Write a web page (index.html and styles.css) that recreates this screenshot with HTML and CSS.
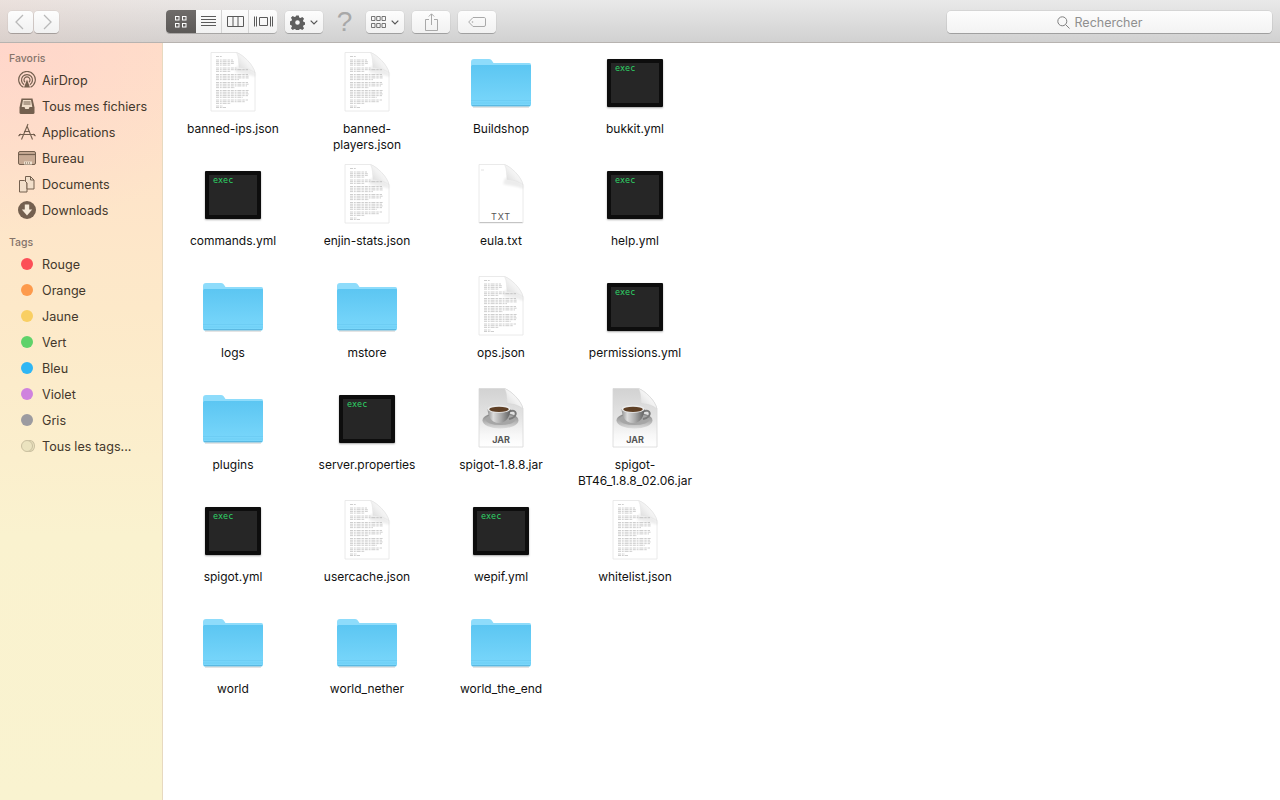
FILE: index.html
```html
<!DOCTYPE html>
<html lang="fr">
<head>
<meta charset="utf-8">
<title>Finder</title>
<link rel="stylesheet" href="styles.css">
</head>
<body>
<svg class="defs" width="0" height="0" aria-hidden="true">
  <defs>
    <filter id="soft" x="-5%" y="-5%" width="110%" height="110%"><feGaussianBlur stdDeviation=".3"/></filter>
    <filter id="softer" x="-20%" y="-20%" width="140%" height="140%"><feGaussianBlur stdDeviation="1"/></filter>
    <linearGradient id="foldShade" x1="0" y1="1" x2="1" y2="0"><stop offset="0" stop-color="#d4d4d4"/><stop offset=".5" stop-color="#f2f2f2"/><stop offset="1" stop-color="#ffffff"/></linearGradient>
    <linearGradient id="jarPage" x1="0" y1="0" x2="0" y2="1"><stop offset="0" stop-color="#d2d2d2"/><stop offset=".5" stop-color="#e4e4e4"/><stop offset=".8" stop-color="#f8f8f8"/><stop offset="1" stop-color="#ffffff"/></linearGradient>
    <linearGradient id="folderFront" x1="0" y1="0" x2="0" y2="1"><stop offset="0" stop-color="#5cc6f2"/><stop offset="1" stop-color="#7ad7fb"/></linearGradient>
    <linearGradient id="cupBody" x1="0" y1="0" x2="1" y2="0"><stop offset="0" stop-color="#8f8f8f"/><stop offset=".25" stop-color="#dcdcdc"/><stop offset=".6" stop-color="#a8a8a8"/><stop offset="1" stop-color="#5e5e5e"/></linearGradient>
    <linearGradient id="saucer" x1="0" y1="0" x2="0" y2="1"><stop offset="0" stop-color="#7c7c7c"/><stop offset="1" stop-color="#dcdcdc"/></linearGradient>
    <symbol id="page" viewBox="0 0 64 64">
      <path d="M11 60H53" stroke="#000" stroke-opacity=".3" stroke-width="2" filter="url(#softer)"/>
      <path d="M10 2.500H35.500C42 5 52 14 54 23V61H10Z" fill="#fff" stroke="#e4e4e4" stroke-width=".8"/>
      <path d="M34 22C40 24 48 24 54 27V23L50 18L36 16Z" fill="#000" opacity=".07" filter="url(#softer)"/>
      <path d="M35.500 2.500C38 7 37.500 12 38 17.500C43 18 49 18.500 54 23C52 14 42 5 35.500 2.500Z" fill="url(#foldShade)" stroke="#e0e0e0" stroke-width=".5"/>
    </symbol>
    <symbol id="doc" viewBox="0 0 64 64">
      <use href="#page"/>
      <g fill="none" stroke="#808080" stroke-opacity=".6" stroke-width=".65" stroke-dasharray="3 .9 1.800 .9 4 .9 2.400 .9" filter="url(#soft)">
        <path d="M15 6.500H21"/>
        <path d="M15 10H32M15 11.700H33M15 13.400H33M15 15.100H30"/>
        <path d="M15 18H36M15 19.700H47M15 21.400H30"/>
        <path d="M15 24.500H47M15 26.200H48M15 27.900H48M15 29.600H38"/>
        <path d="M15 32.500H47M15 34.200H48M15 35.900H46M15 37.600H34"/>
        <path d="M15 40.500H48M15 42.200H47M15 43.900H48M15 45.600H47M15 47.300H42"/>
        <path d="M15 50H47M15 51.700H44M15 53.400H30"/>
        <path d="M15 56H22M15 57.500H25"/>
      </g>
    </symbol>
    <symbol id="blank" viewBox="0 0 64 64">
      <use href="#page"/>
      <path d="M12 8H15" stroke="#e2e2e2"/>
      <path d="M10.500 60.500H53.500" stroke="#c4c4c4"/>
    </symbol>
    <symbol id="jar" viewBox="0 0 64 64">
      <path d="M11 60H53" stroke="#000" stroke-opacity=".3" stroke-width="2" filter="url(#softer)"/>
      <path d="M10 2.500H35.500C42 5 52 14 54 23V61H10Z" fill="url(#jarPage)" stroke="#d8d8d8" stroke-width=".8"/>
      <path d="M35.500 2.500C38 7 37.500 12 38 17.500C43 18 49 18.500 54 23C52 14 42 5 35.500 2.500Z" fill="url(#foldShade)" stroke="#d5d5d5" stroke-width=".5"/>
      <ellipse cx="31.500" cy="34.500" rx="18" ry="8" fill="url(#saucer)" filter="url(#soft)"/>
      <ellipse cx="31.500" cy="33.500" rx="15" ry="5.500" fill="#a6a6a6"/>
      <path d="M40 25.500C48 22 50 31 40 33" fill="none" stroke="#7a7a7a" stroke-width="2"/>
      <path d="M18.500 23C19 30 22 37 30 37S41 30 41.500 23Z" fill="url(#cupBody)"/>
      <ellipse cx="30" cy="23" rx="11.500" ry="3.800" fill="#ececec"/>
      <ellipse cx="30" cy="23.300" rx="9.800" ry="2.600" fill="#5f4026"/>
    </symbol>
    <symbol id="folder" viewBox="0 0 64 64">
      <path d="M2 12C2 10 3 9 5 9H20C22 9 22.500 10 23.500 11.500L24.500 13H60C62 13 62 14 62 16V54C62 56 61 57 59 57H5C3 57 2 56 2 54Z" fill="#8edcfb"/>
      <path d="M2 17C2 15.500 3 15 4 15H61C62 15 62 15.500 62 17V54C62 55.500 61 56 60 56H4C3 56 2 55.500 2 54Z" fill="url(#folderFront)"/>
      <path d="M2 50.500H62M2 53H62" stroke="#63c5ee" stroke-width=".8" opacity=".6"/>
      <path d="M3 55.500H61" stroke="#5bb9e2" stroke-width="1.200"/>
      <path d="M4 57H60" stroke="#c9c9c9" stroke-width="1"/>
    </symbol>
  </defs>
</svg>

<div class="window">
  <header class="toolbar">
    <div class="nav">
      <button class="btn nav-btn"><svg width="25" height="22" viewBox="0 0 25 22"><path d="M15 4L8 11l7 7" class="chev"/></svg></button>
      <button class="btn nav-btn"><svg width="25" height="22" viewBox="0 0 25 22"><path d="M10 4l7 7-7 7" class="chev"/></svg></button>
    </div>
    <div class="views">
      <div class="view view-on view-a"><svg width="12" height="12" viewBox="0 0 12 12"><g fill="none" stroke="#fff"><rect x=".5" y=".5" width="3.500" height="3.500"/><rect x="7.500" y=".5" width="3.500" height="3.500"/><rect x=".5" y="7.500" width="3.500" height="3.500"/><rect x="7.500" y="7.500" width="3.500" height="3.500"/></g></svg></div>
      <div class="view view-b"><svg width="15" height="11" viewBox="0 0 15 11"><path d="M0 .5H15M0 3.500H15M0 6.500H15M0 9.500H15" stroke="#5a5a5a"/></svg></div>
      <div class="view view-c"><svg width="17" height="11" viewBox="0 0 17 11"><path d="M.5.5H16.500V10.500H.5ZM6 .5V10.500M11 .5V10.500" fill="none" stroke="#5a5a5a"/></svg></div>
      <div class="view view-d"><svg width="19" height="11" viewBox="0 0 19 11"><path d="M.5.5V10.500M2.500.5V10.500M16.500.5V10.500M18.500.5V10.500M5.500 1.500H13.500V9.500H5.500Z" fill="none" stroke="#5a5a5a"/></svg></div>
    </div>
    <button class="btn action">
      <svg width="15" height="15" viewBox="0 0 15 15"><path d="M6.200.5h2.600l.4 2 1.300.6 1.800-1.100 1.800 1.800-1.100 1.800.6 1.300 2 .4v2.400l-2 .5-.6 1.300 1.100 1.700-1.800 1.800-1.800-1.100-1.300.6-.4 2H6.200l-.4-2-1.300-.6-1.800 1.100-1.800-1.800 1.100-1.700-.6-1.300-2-.5V6.300l2-.4.6-1.300L.9 2.800l1.800-1.800 1.800 1.100 1.300-.6ZM7.500 5.200a2.300 2.300 0 1 0 0 4.600 2.300 2.300 0 0 0 0-4.600Z" fill="#5f5f5f" fill-rule="evenodd"/></svg>
      <svg width="8" height="5" viewBox="0 0 8 5"><path d="M.7.7L4 4 7.300.7" class="caret"/></svg>
    </button>
    <span class="help">?</span>
    <button class="btn arrange">
      <svg width="15" height="12" viewBox="0 0 15 12"><g fill="none" stroke="#666" stroke-width=".9"><path d="M.5.500h3.500v4H.5ZM5.700.500h3.500v4H5.700ZM11 .500h3.500v4H11Z"/><path d="M.5 7.500h3.500v4H.5ZM5.700 7.500h3.500v4H5.700ZM11 7.500h3.500v4H11Z"/></g></svg>
      <svg width="8" height="5" viewBox="0 0 8 5"><path d="M.7.7L4 4 7.300.7" class="caret"/></svg>
    </button>
    <button class="btn share"><svg width="13" height="18" viewBox="0 0 13 18"><path d="M4 6.500H.5V17.500H12.500V6.500H9M6.500 12V1M3.800 3.500L6.500.8 9.200 3.500" fill="none" stroke="#a9a9a9"/></svg></button>
    <button class="btn tag"><svg width="18" height="10" viewBox="0 0 18 10"><path d="M5 .5H16C17 .5 17.500 1 17.500 2V8C17.500 9 17 9.500 16 9.500H5L.7 5Z" fill="none" stroke="#a9a9a9"/><circle cx="4.500" cy="5" r=".8" fill="#a9a9a9"/></svg></button>
    <div class="search">
      <svg width="13" height="13" viewBox="0 0 13 13"><circle cx="5.300" cy="5.300" r="4.500" fill="none" stroke="#808080"/><path d="M8.500 8.500L12.500 12.500" stroke="#808080"/></svg>
      <span>Rechercher</span>
    </div>
  </header>

  <div class="body">
    <aside class="sidebar">
      <h2 class="heading">Favoris</h2>
      <div class="row"><svg class="side-icon" viewBox="0 0 18 18"><g fill="none" stroke="#74604f" stroke-width="1.200"><path d="M5.500 16.300A8.300 8.300 0 1 1 12.500 16.300"/><path d="M6.100 13.700A5.500 5.500 0 1 1 11.900 13.700"/><path d="M7 11.200A3 3 0 1 1 11 11.200"/></g><path d="M9 8.500l3 8H6Z" fill="#74604f"/></svg><span>AirDrop</span></div>
      <div class="row"><svg class="side-icon" viewBox="0 0 18 18"><path d="M3.500 1.500h11l2 9v5a1.500 1.500 0 0 1-1.500 1.500H3A1.500 1.500 0 0 1 1.500 15.500v-5Z" fill="#74604f"/><path d="M5 3h8l1.300 7H11.500l-.8 2H7.300l-.8-2H3.700Z" fill="#f0ddc9"/><path d="M5.500 5h7M5.500 7h7" stroke="#74604f"/></svg><span>Tous mes fichiers</span></div>
      <div class="row"><svg class="side-icon" viewBox="0 0 18 18"><g fill="none" stroke="#74604f" stroke-width="1.100"><path d="M10 1L3.500 16.500M9 3L14.500 16.500M1 11.500H17"/><path d="M6 8.500H12"/><path d="M.5 13L3 11M17.500 13L15 11"/></g></svg><span>Applications</span></div>
      <div class="row"><svg class="side-icon" viewBox="0 0 18 18"><rect x=".5" y="2.500" width="17" height="13" rx="1.500" fill="#c7aa94" stroke="#74604f"/><path d="M1 5.500H17" stroke="#74604f" stroke-width="1.200"/><rect x="6" y="12.500" width="8" height="3" fill="#efe1d0"/><path d="M7 14h6" stroke="#74604f" stroke-dasharray="1 1"/></svg><span>Bureau</span></div>
      <div class="row"><svg class="side-icon" viewBox="0 0 18 18"><path d="M1.500 5.500h5l2.500 2.500v9H1.500Z" fill="#f2dfca" stroke="#74604f"/><path d="M7.500 1.500h5l3.500 3.500v9h-7V8L7.500 6.500Z" fill="#f2dfca" stroke="#74604f"/><path d="M12.500 1.500V5H16" fill="none" stroke="#74604f"/></svg><span>Documents</span></div>
      <div class="row"><svg class="side-icon" viewBox="0 0 18 18"><circle cx="9" cy="9" r="9" fill="#74604f"/><path d="M6.800 3.500h4.400V8.500h3L9 14.500 3.800 8.500h3Z" fill="#f7ead8"/></svg><span>Downloads</span></div>

      <h2 class="heading heading-tags">Tags</h2>
      <div class="row"><span class="dot dot-red"></span><span>Rouge</span></div>
      <div class="row"><span class="dot dot-orange"></span><span>Orange</span></div>
      <div class="row"><span class="dot dot-yellow"></span><span>Jaune</span></div>
      <div class="row"><span class="dot dot-green"></span><span>Vert</span></div>
      <div class="row"><span class="dot dot-blue"></span><span>Bleu</span></div>
      <div class="row"><span class="dot dot-violet"></span><span>Violet</span></div>
      <div class="row"><span class="dot dot-gray"></span><span>Gris</span></div>
      <div class="row"><span class="dot dot-all"></span><span>Tous les tags...</span></div>
    </aside>

    <main class="files">
      <div class="item"><div class="icon"><svg><use href="#doc"/></svg></div><div class="name">banned-ips.json</div></div>
      <div class="item"><div class="icon"><svg><use href="#doc"/></svg></div><div class="name">banned-<br>players.json</div></div>
      <div class="item"><div class="icon"><svg><use href="#folder"/></svg></div><div class="name">Buildshop</div></div>
      <div class="item"><div class="icon"><div class="exec"><span>exec</span></div></div><div class="name">bukkit.yml</div></div>

      <div class="item"><div class="icon"><div class="exec"><span>exec</span></div></div><div class="name">commands.yml</div></div>
      <div class="item"><div class="icon"><svg><use href="#doc"/></svg></div><div class="name">enjin-stats.json</div></div>
      <div class="item"><div class="icon"><svg><use href="#blank"/></svg><span class="ext ext-txt">TXT</span></div><div class="name">eula.txt</div></div>
      <div class="item"><div class="icon"><div class="exec"><span>exec</span></div></div><div class="name">help.yml</div></div>

      <div class="item"><div class="icon"><svg><use href="#folder"/></svg></div><div class="name">logs</div></div>
      <div class="item"><div class="icon"><svg><use href="#folder"/></svg></div><div class="name">mstore</div></div>
      <div class="item"><div class="icon"><svg><use href="#doc"/></svg></div><div class="name">ops.json</div></div>
      <div class="item"><div class="icon"><div class="exec"><span>exec</span></div></div><div class="name">permissions.yml</div></div>

      <div class="item"><div class="icon"><svg><use href="#folder"/></svg></div><div class="name">plugins</div></div>
      <div class="item"><div class="icon"><div class="exec"><span>exec</span></div></div><div class="name">server.properties</div></div>
      <div class="item"><div class="icon"><svg><use href="#jar"/></svg><span class="ext ext-jar">JAR</span></div><div class="name">spigot-1.8.8.jar</div></div>
      <div class="item"><div class="icon"><svg><use href="#jar"/></svg><span class="ext ext-jar">JAR</span></div><div class="name">spigot-<br>BT46_1.8.8_02.06.jar</div></div>

      <div class="item"><div class="icon"><div class="exec"><span>exec</span></div></div><div class="name">spigot.yml</div></div>
      <div class="item"><div class="icon"><svg><use href="#doc"/></svg></div><div class="name">usercache.json</div></div>
      <div class="item"><div class="icon"><div class="exec"><span>exec</span></div></div><div class="name">wepif.yml</div></div>
      <div class="item"><div class="icon"><svg><use href="#doc"/></svg></div><div class="name">whitelist.json</div></div>

      <div class="item"><div class="icon"><svg><use href="#folder"/></svg></div><div class="name">world</div></div>
      <div class="item"><div class="icon"><svg><use href="#folder"/></svg></div><div class="name">world_nether</div></div>
      <div class="item"><div class="icon"><svg><use href="#folder"/></svg></div><div class="name">world_the_end</div></div>
    </main>
  </div>
</div>
</body>
</html>
```
FILE: styles.css
```css
* { box-sizing: border-box; }
html, body { margin: 0; height: 100%; overflow: hidden; background: #fff; }
body { font-family: Inter, "Liberation Sans", Arial, sans-serif; }
.defs { position: absolute; }
.window { width: 1280px; height: 800px; display: flex; flex-direction: column; }

.toolbar {
  height: 43px;
  flex: none;
  display: flex;
  align-items: flex-start;
  padding: 11px 8px 0;
  border-bottom: 1px solid #b7b3b0;
  background:
    linear-gradient(90deg, rgba(240, 205, 190, .28) 0, rgba(240, 205, 190, 0) 300px),
    linear-gradient(180deg, #e9e9e9 0, #d1d1d1 100%);
}
.btn {
  height: 22px;
  padding: 0;
  border: 0;
  border-radius: 4px;
  background: linear-gradient(180deg, #fdfdfd, #f1f1f1);
  box-shadow: 0 0 0 .5px rgba(0, 0, 0, .08), 0 1px 0 rgba(0, 0, 0, .22);
  display: flex;
  align-items: center;
  justify-content: center;
  gap: 5px;
}
.nav { display: flex; gap: 1px; }
.nav-btn { width: 25px; }
.chev { fill: none; stroke: #b9b9b9; stroke-width: 1.300; }
.caret { fill: none; stroke: #555; stroke-width: 1.200; }

.views {
  display: flex;
  margin-left: 107px;
  margin-top: -1px;
  height: 23px;
  border-radius: 4px;
  overflow: hidden;
  background: linear-gradient(180deg, #fdfdfd, #f1f1f1);
  box-shadow: 0 1px 0 rgba(0, 0, 0, .22);
}
.view { display: flex; align-items: center; justify-content: center; border-right: 1px solid #d4d4d4; }
.view-a { width: 30px; background: linear-gradient(180deg, #6f6c6a, #5c5957); border-right: 0; }
.view-b { width: 26px; }
.view-c { width: 27px; }
.view-d { width: 28px; border-right: 0; }

.action { width: 38px; margin-left: 8px; }
.help {
  width: 43px;
  text-align: center;
  font-family: "Liberation Sans", Arial, sans-serif;
  font-size: 28px;
  line-height: 22px;
  color: #a8a8a8;
}
.arrange { width: 38px; }
.share { width: 38px; margin-left: 8px; }
.tag { width: 38px; margin-left: 8px; }

.search {
  width: 325px;
  height: 22px;
  margin-left: auto;
  padding-right: 20px;
  border-radius: 4px;
  background: linear-gradient(180deg, #fdfdfd, #f3f3f3);
  box-shadow: 0 0 0 .5px rgba(0, 0, 0, .12), 0 1px 0 rgba(0, 0, 0, .2);
  display: flex;
  align-items: center;
  justify-content: center;
  gap: 5px;
  font-size: 12.500px;
  color: #8f8f8f;
}

.body { flex: 1; min-height: 0; display: flex; }
.sidebar {
  position: relative;
  z-index: 0;
  width: 163px;
  flex: none;
  padding-top: 6px;
  border-right: 1px solid #e7d9c0;
  background:
    radial-gradient(ellipse 240px 190px at 0 0, rgba(255, 208, 204, .6), rgba(255, 208, 204, 0)),
    linear-gradient(180deg, #ffdfc9 0, #fde9c9 35%, #faf2cf 65%, #f9f3d0 100%);
}
.heading {
  margin: 0;
  height: 18px;
  padding-left: 9px;
  font-size: 10.500px;
  line-height: 20px;
  font-weight: 500;
  color: #85746a;
}
.heading-tags { margin-top: 10px; }
.row {
  height: 26px;
  display: flex;
  align-items: center;
  padding-left: 18px;
  gap: 6px;
  font-size: 12.600px;
  color: #43382c;
}
.side-icon { width: 18px; height: 18px; flex: none; }
.dot {
  position: relative;
  width: 12px;
  height: 12px;
  margin: 0 3px;
  flex: none;
  border-radius: 50%;
}
.dot-red { background: #fc4f57; }
.dot-orange { background: #fd9a4c; }
.dot-yellow { background: #f9cf63; }
.dot-green { background: #5fd26a; }
.dot-blue { background: #2fb6f4; }
.dot-violet { background: #cf82de; }
.dot-gray { background: #9c9ba0; }
.dot-all { background: #ebe3bf; border: 1px solid #c9bf9f; }
.dot-all::before {
  content: "";
  position: absolute;
  z-index: -1;
  inset: -1px -3px -1px 3px;
  border-radius: 50%;
  background: #ebe3bf;
  border: 1px solid #c9bf9f;
}

.files {
  flex: 1;
  padding: 7px 0 0 3px;
  display: grid;
  grid-template-columns: repeat(4, 134px);
  grid-auto-rows: 112px;
  align-content: start;
  background: #fff;
}
.item { display: flex; flex-direction: column; align-items: center; }
.icon {
  position: relative;
  width: 64px;
  height: 64px;
  display: flex;
  align-items: center;
  justify-content: center;
}
.icon svg { width: 64px; height: 64px; display: block; }
.name {
  margin-top: 7px;
  font-size: 12px;
  line-height: 16px;
  text-align: center;
  white-space: nowrap;
  color: #111;
}
.exec {
  width: 56px;
  height: 48px;
  margin-top: 2px;
  padding: 3px 5px;
  background: #262626;
  border: 4px solid #0d0d0d;
  border-radius: 1px;
  box-shadow: 0 1px 2px rgba(0, 0, 0, .35);
  font-family: "DejaVu Sans Mono", "Liberation Mono", monospace;
  font-size: 8.400px;
  line-height: 9px;
  color: #2ed566;
}
.exec span { display: block; margin: -2px 0 0 -1px; }
.ext {
  position: absolute;
  left: 0;
  right: 0;
  text-align: center;
  font-size: 9px;
  line-height: 10px;
  color: #555;
}
.ext-txt { top: 50px; letter-spacing: .8px; font-weight: 400; }
.ext-jar { top: 49px; font-weight: 700; }
```
